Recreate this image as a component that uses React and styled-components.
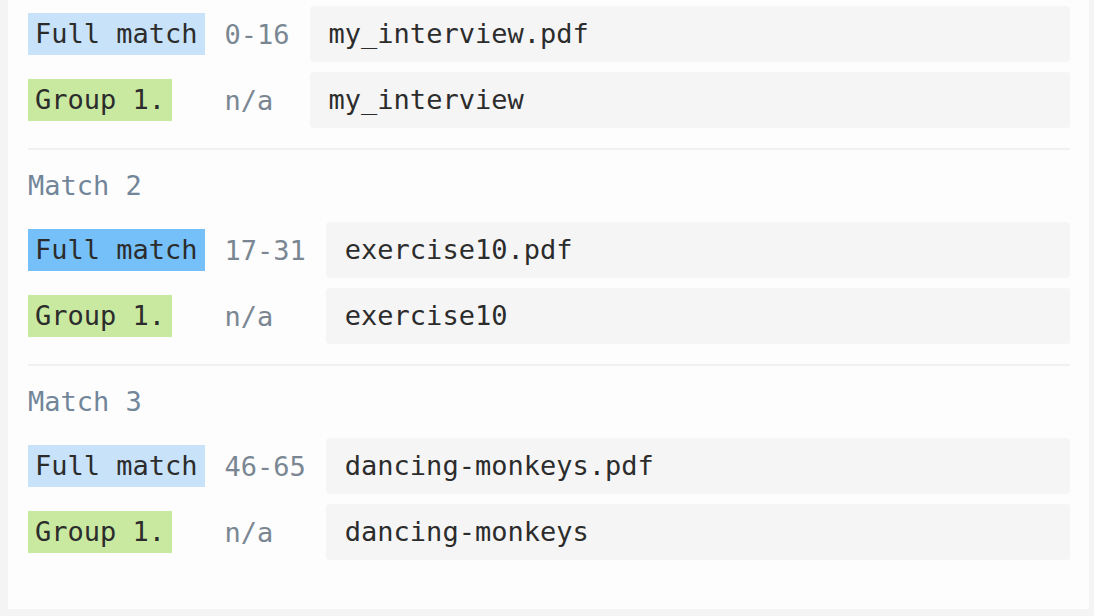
import React from "react";
import styled, { createGlobalStyle } from "styled-components";

const GlobalStyle = createGlobalStyle`
  html, body {
    margin: 0;
    padding: 0;
    background: #f4f4f5;
  }
  body {
    font-family: "DejaVu Sans Mono", "Liberation Mono", monospace;
  }
`;

const Page = styled.div`
  width: 1094px;
  height: 616px;
  box-sizing: border-box;
  padding: 0 5px 7px 8px;
  background: #f4f4f5;
  overflow: hidden;
`;

const Panel = styled.div`
  height: 100%;
  box-sizing: border-box;
  background: #fdfdfd;
  padding: 6px 19px 0 20px;
`;

const MatchBlock = styled.section`
  & + & {
    margin-top: 20px;
    border-top: 2px solid #f1f1f2;
    padding-top: 16px;
  }
`;

const MatchTitle = styled.div`
  font-size: 27px;
  line-height: 40px;
  height: 40px;
  color: #72869a;
  margin-bottom: 16px;
`;

const Grid = styled.div`
  display: grid;
  grid-template-columns: auto auto 1fr;
  column-gap: 20px;
  row-gap: 10px;
  align-items: center;
`;

const Label = styled.span`
  justify-self: start;
  height: 42px;
  line-height: 42px;
  padding: 0 7px;
  font-size: 27px;
  color: #2c2c2c;
  background: ${(p) =>
    p.kind === "group" ? "#c9e8a0" : p.active ? "#75c0f8" : "#c8e2f9"};
`;

const Range = styled.span`
  font-size: 27px;
  color: #7a8793;
  white-space: nowrap;
`;

const Value = styled.div`
  height: 56px;
  line-height: 56px;
  padding-left: 19px;
  border-radius: 4px;
  background: #f5f5f5;
  font-size: 27px;
  color: #2c2c2c;
`;

const matches = [
  {
    title: null,
    rows: [
      { kind: "full", name: "Full match", range: "0-16", value: "my_interview.pdf" },
      { kind: "group", name: "Group 1.", range: "n/a", value: "my_interview" },
    ],
  },
  {
    title: "Match 2",
    active: true,
    rows: [
      { kind: "full", name: "Full match", range: "17-31", value: "exercise10.pdf" },
      { kind: "group", name: "Group 1.", range: "n/a", value: "exercise10" },
    ],
  },
  {
    title: "Match 3",
    rows: [
      { kind: "full", name: "Full match", range: "46-65", value: "dancing-monkeys.pdf" },
      { kind: "group", name: "Group 1.", range: "n/a", value: "dancing-monkeys" },
    ],
  },
];

function App() {
  return (
    <>
      <GlobalStyle />
      <Page>
        <Panel>
          {matches.map((m, i) => (
            <MatchBlock key={i}>
              {m.title && <MatchTitle>{m.title}</MatchTitle>}
              <Grid>
                {m.rows.map((r) => (
                  <React.Fragment key={r.name}>
                    <Label kind={r.kind} active={m.active && r.kind === "full"}>
                      {r.name}
                    </Label>
                    <Range>{r.range}</Range>
                    <Value>{r.value}</Value>
                  </React.Fragment>
                ))}
              </Grid>
            </MatchBlock>
          ))}
        </Panel>
      </Page>
    </>
  );
}

export default App;
